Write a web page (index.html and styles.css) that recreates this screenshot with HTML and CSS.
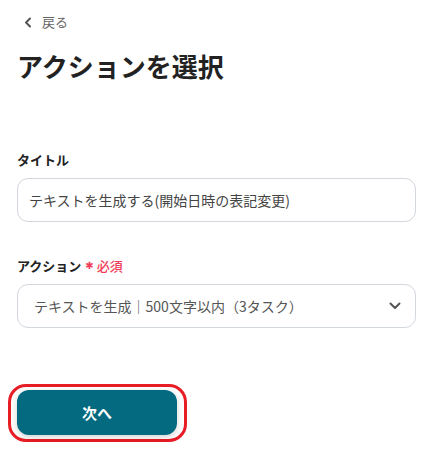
FILE: index.html
```html
<!DOCTYPE html>
<html lang="ja">
<head>
<meta charset="utf-8">
<link rel="stylesheet" href="styles.css">
</head>
<body>
<div class="page">
  <a class="back">
    <svg class="back-icon" width="8" height="11" viewBox="0 0 8 11"><path d="M6 1.5 L2 5.5 L6 9.5" fill="none" stroke="#555" stroke-width="2" stroke-linecap="round" stroke-linejoin="round"/></svg>
    <span>戻る</span>
  </a>
  <h1 class="title">アクションを選択</h1>

  <div class="field field-first">
    <label class="label">タイトル</label>
    <div class="input">テキストを生成する(開始日時の表記変更)</div>
  </div>

  <div class="field">
    <label class="label">アクション<span class="star">✱</span><span class="req">必須</span></label>
    <div class="select">
      <span>テキストを生成｜500文字以内（3タスク）</span>
      <svg class="chev" width="12" height="8" viewBox="0 0 12 8"><path d="M1.5 1.5 L6 6 L10.5 1.5" fill="none" stroke="#555" stroke-width="2" stroke-linecap="round" stroke-linejoin="round"/></svg>
    </div>
  </div>

  <div class="highlight">
    <button class="next">次へ</button>
  </div>
</div>
</body>
</html>
```
FILE: styles.css
```css
* { box-sizing: border-box; }
html, body { margin: 0; padding: 0; background: #fff; }
body {
  font-family: "Noto Sans CJK JP", "Noto Sans", sans-serif;
  color: #222;
}
.page {
  padding: 12px 25px 0 17px;
  display: flex;
  flex-direction: column;
}
.back {
  display: flex;
  align-items: center;
  gap: 10px;
  padding-left: 7px;
  font-size: 13px;
  color: #666;
  line-height: 20px;
  height: 20px;
}
.back-icon { display: block; }
.title {
  margin: 16px 0 0;
  font-size: 26px;
  font-weight: 700;
  line-height: 36px;
  color: #222;
  letter-spacing: 0;
}
.field { display: flex; flex-direction: column; }
.field-first { margin-top: 66px; }
.field + .field { margin-top: 34px; }
.label {
  font-size: 13px;
  font-weight: 700;
  line-height: 20px;
  color: #222;
  margin-bottom: 8px;
  display: flex;
  align-items: center;
}
.star {
  color: #f03e5a;
  font-family: "DejaVu Sans", sans-serif;
  font-weight: 400;
  font-size: 10px;
  margin-left: 4px;
  line-height: 20px;
}
.req {
  color: #f03e5a;
  font-weight: 500;
  margin-left: 3px;
}
.input, .select {
  height: 44px;
  border: 1px solid #d3d8de;
  border-radius: 11px;
  display: flex;
  align-items: center;
  font-size: 14px;
  color: #444;
}
.input { padding-left: 11px; }
.select {
  padding-left: 16px;
  padding-right: 14px;
  justify-content: space-between;
  color: #555;
}
.chev { display: block; }
.highlight {
  margin-top: 56px;
  margin-left: -9px;
  width: 179px;
  height: 58px;
  border: 3px solid #e81c24;
  border-radius: 18px;
  padding: 3px 7px 4px 6px;
  display: flex;
}
.next {
  width: 160px;
  height: 45px;
  border: none;
  border-radius: 12px;
  background: #036a80;
  color: #fff;
  font-family: inherit;
  font-size: 15px;
  font-weight: 700;
  box-shadow: 0 2px 6px rgba(0, 0, 0, 0.18);
}
```
